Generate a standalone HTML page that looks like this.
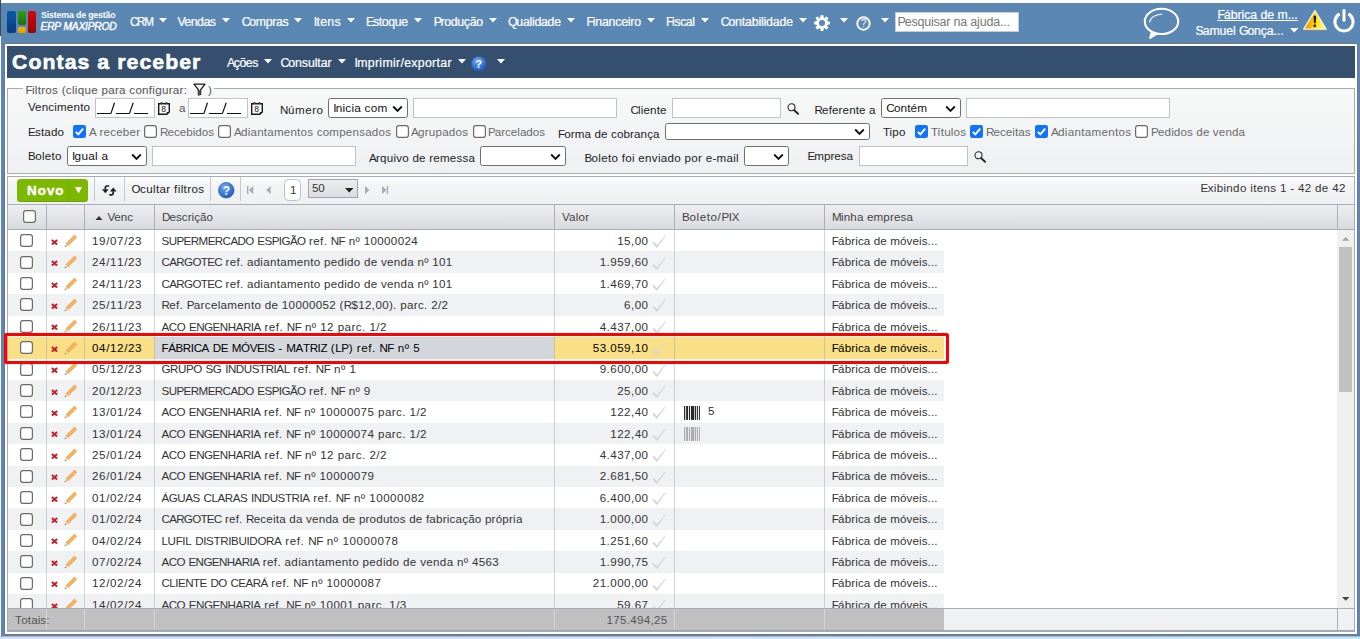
<!DOCTYPE html><html><head><meta charset="utf-8"><title>Contas a receber</title><style>
html,body{margin:0;padding:0}body{width:1360px;height:639px;overflow:hidden;position:relative;font-family:"Liberation Sans", sans-serif;background:#5b87b4}
#p div,#p svg,#p span{position:absolute;display:block}#p{position:absolute;left:0;top:0;width:1360px;height:639px;overflow:hidden}
.t{white-space:pre;font-kerning:none;font-family:"Liberation Sans", sans-serif}.t i{font-style:inherit}
</style></head><body><div id="p">
<div style="left:0px;top:0px;width:1360px;height:639px;background:#5b87b4;"></div>
<div style="left:0px;top:0px;width:1360px;height:3px;background:#ffffff;"></div>
<div style="left:0px;top:36px;width:1px;height:601px;background:#ffffff;"></div>
<div style="left:0px;top:0px;width:1px;height:36px;background:#414a52;"></div>
<div style="left:0px;top:636px;width:1360px;height:3px;background:linear-gradient(to right,#d9def0,#d6e2f3 50%,#c6e8f0);"></div>
<div style="left:0px;top:636px;width:1360px;height:1px;background:rgba(91,135,180,.45);"></div>
<div style="left:0px;top:637px;width:1px;height:2px;background:#bdeff0;"></div>
<div style="left:4px;top:43px;width:1354px;height:592px;background:#fff;border:1px solid #77757d;box-sizing:border-box"></div>
<div style="left:7px;top:46px;width:1348px;height:32px;background:#35506e;"></div>
<div style="left:7px;top:88px;width:1348px;height:86px;border:1px solid #a6acb6;box-sizing:border-box;background:linear-gradient(#f7f8f8,#eff0f1)"></div>
<div style="left:22.5px;top:88px;width:191.5px;height:1px;background:#f9f9f9;"></div>
<div style="left:7px;top:11px;width:8.5px;height:21.5px;border-radius:2px;background:linear-gradient(#0a5aa8,#073c7a)"></div>
<div style="left:17.5px;top:11px;width:8.5px;height:13.5px;border-radius:2px;background:linear-gradient(#2fa00f,#1d7010)"></div>
<div style="left:17.5px;top:26.5px;width:8.5px;height:6px;border-radius:1.5px;background:linear-gradient(#f5b400,#e09a00)"></div>
<div style="left:27.5px;top:11px;width:8.5px;height:21.5px;border-radius:2px;background:linear-gradient(#d80808,#980404)"></div>
<svg style="left:159px;top:18px" width="8" height="4.5" viewBox="0 0 8 4.5"><path d="M0 0H8L4.0 4.5Z" fill="#fff"/></svg>
<svg style="left:222px;top:18px" width="8" height="4.5" viewBox="0 0 8 4.5"><path d="M0 0H8L4.0 4.5Z" fill="#fff"/></svg>
<svg style="left:294px;top:18px" width="8" height="4.5" viewBox="0 0 8 4.5"><path d="M0 0H8L4.0 4.5Z" fill="#fff"/></svg>
<svg style="left:347px;top:18px" width="8" height="4.5" viewBox="0 0 8 4.5"><path d="M0 0H8L4.0 4.5Z" fill="#fff"/></svg>
<svg style="left:414px;top:18px" width="8" height="4.5" viewBox="0 0 8 4.5"><path d="M0 0H8L4.0 4.5Z" fill="#fff"/></svg>
<svg style="left:488.7px;top:18px" width="8" height="4.5" viewBox="0 0 8 4.5"><path d="M0 0H8L4.0 4.5Z" fill="#fff"/></svg>
<svg style="left:566.7px;top:18px" width="8" height="4.5" viewBox="0 0 8 4.5"><path d="M0 0H8L4.0 4.5Z" fill="#fff"/></svg>
<svg style="left:647px;top:18px" width="8" height="4.5" viewBox="0 0 8 4.5"><path d="M0 0H8L4.0 4.5Z" fill="#fff"/></svg>
<svg style="left:700.7px;top:18px" width="8" height="4.5" viewBox="0 0 8 4.5"><path d="M0 0H8L4.0 4.5Z" fill="#fff"/></svg>
<svg style="left:798.7px;top:18px" width="8" height="4.5" viewBox="0 0 8 4.5"><path d="M0 0H8L4.0 4.5Z" fill="#fff"/></svg>
<svg style="left:839.5px;top:18px" width="8" height="4.5" viewBox="0 0 8 4.5"><path d="M0 0H8L4.0 4.5Z" fill="#fff"/></svg>
<svg style="left:880.5px;top:18px" width="8" height="4.5" viewBox="0 0 8 4.5"><path d="M0 0H8L4.0 4.5Z" fill="#fff"/></svg>
<svg style="left:814px;top:14.900px" width="16" height="16" viewBox="-8 -8 16 16"><g fill="#fff">
<circle r="5.600"/><path d="M-1.900 -5L-1.250 -7.900H1.250L1.900 -5Z" transform="rotate(0)"/><path d="M-1.900 -5L-1.250 -7.900H1.250L1.900 -5Z" transform="rotate(45)"/><path d="M-1.900 -5L-1.250 -7.900H1.250L1.900 -5Z" transform="rotate(90)"/><path d="M-1.900 -5L-1.250 -7.900H1.250L1.900 -5Z" transform="rotate(135)"/><path d="M-1.900 -5L-1.250 -7.900H1.250L1.900 -5Z" transform="rotate(180)"/><path d="M-1.900 -5L-1.250 -7.900H1.250L1.900 -5Z" transform="rotate(225)"/><path d="M-1.900 -5L-1.250 -7.900H1.250L1.900 -5Z" transform="rotate(270)"/><path d="M-1.900 -5L-1.250 -7.900H1.250L1.900 -5Z" transform="rotate(315)"/></g><circle r="3.050" fill="#5b87b4"/></svg>
<svg style="left:855.500px;top:15.800px" width="15" height="15" viewBox="0 0 15 15"><circle cx="7.500" cy="7.500" r="6.200" fill="none" stroke="#fff" stroke-width="1.900"/><text x="7.500" y="11" font-size="10" text-anchor="middle" fill="#fff" font-family="Liberation Sans">?</text></svg>
<div style="left:895px;top:12px;width:124px;height:20px;background:#fff;border:1px solid #c8ccd2;box-sizing:border-box"></div>
<svg style="left:1142px;top:6px" width="40" height="34" viewBox="0 0 40 34"><path d="M9.700 25.300L7.800 32.400L15.800 27.400" fill="#fff" stroke="#fff" stroke-width="1.400" stroke-linejoin="round"/><ellipse cx="19.500" cy="15.400" rx="16.700" ry="12.600" fill="#5b87b4" stroke="#fff" stroke-width="2.100"/><path d="M7.700 16C8.300 11.500 13.500 8.300 19.800 8.100" fill="none" stroke="#e3ebf4" stroke-width="1.300" stroke-linecap="round"/></svg>
<svg style="left:1290px;top:28px" width="8.5" height="4.5" viewBox="0 0 8.5 4.5"><path d="M0 0H8.5L4.25 4.5Z" fill="#fff"/></svg>
<svg style="left:1302px;top:8px" width="26" height="24" viewBox="0 0 26 24"><defs><linearGradient id="wg" x1="0" y1="0" x2="1" y2="0"><stop offset=".2" stop-color="#f5a200"/><stop offset=".55" stop-color="#ffe000"/><stop offset=".85" stop-color="#fff870"/></linearGradient></defs><path d="M1.300 22.300H24.800" stroke="#7d8590" stroke-width="1.200"/><path d="M12.900 2.600L24.200 21.200H1.700Z" fill="url(#wg)" stroke="#f4f1e6" stroke-width="1.300" stroke-linejoin="round"/><path d="M11.600 7.800H14.100L13.700 15.200H12Z" fill="#151515"/><rect x="11.700" y="16.600" width="2.300" height="2.300" rx=".6" fill="#151515"/></svg>
<svg style="left:1332px;top:8px" width="24" height="26" viewBox="0 0 24 26"><path d="M7.630 5.820A9.100 9.100 0 1 0 16.370 5.820" fill="none" stroke="#fff" stroke-width="3"/><path d="M12 2.600V12.200" stroke="#fff" stroke-width="3" stroke-linecap="round"/></svg>
<svg style="left:264px;top:59px" width="8" height="4.5" viewBox="0 0 8 4.5"><path d="M0 0H8L4.0 4.5Z" fill="#fff"/></svg>
<svg style="left:337.5px;top:59px" width="8" height="4.5" viewBox="0 0 8 4.5"><path d="M0 0H8L4.0 4.5Z" fill="#fff"/></svg>
<svg style="left:457.5px;top:59px" width="8" height="4.5" viewBox="0 0 8 4.5"><path d="M0 0H8L4.0 4.5Z" fill="#fff"/></svg>
<svg style="left:497px;top:59px" width="8" height="4.5" viewBox="0 0 8 4.5"><path d="M0 0H8L4.0 4.5Z" fill="#fff"/></svg>
<svg style="left:471.4px;top:56.2px" width="15.5" height="15.5" viewBox="0 0 16 16"><defs><radialGradient id="hg471" cx=".4" cy=".3" r=".8"><stop offset="0" stop-color="#6fa8f0"/><stop offset="1" stop-color="#1550b8"/></radialGradient></defs><circle cx="8" cy="8" r="7.600" fill="url(#hg471)" stroke="#2a5cb0" stroke-width=".6"/><text x="8" y="12.300" font-size="11.500" font-weight="bold" text-anchor="middle" fill="#fff" font-family="Liberation Sans">?</text></svg>
<svg style="left:192.500px;top:82.500px" width="13" height="13" viewBox="0 0 13 13"><path d="M1 1.200H12L7.600 6.800V11.300L5.400 12V6.800Z" fill="#f6f6f7" stroke="#1a1a1a" stroke-width="1.300" stroke-linejoin="round"/><path d="M5.400 7H7.600V11.300L5.400 12Z" fill="#555"/></svg>
<div style="left:95px;top:98px;width:60px;height:20px;background:#fff;border:1px solid #bfc2c6;box-sizing:border-box"></div>
<svg style="left:97.2px;top:102px" width="52" height="13" viewBox="0 0 52 13"><g stroke="#111" fill="none"><path d="M0 11.500H13.800M18.900 11.500H32.300M37 11.500H51" stroke-width="1.100"/><path d="M13.900 11.600L17.500 .8M32.400 11.600L36.200 .8" stroke-width="1.200"/></g></svg>
<svg style="left:158px;top:102px" width="12" height="13" viewBox="0 0 12 13"><path d="M.7 1.700H11.300V10L8.800 12.300H.7Z" fill="#fff" stroke="#1a1a1a" stroke-width="1.400" stroke-linejoin="miter"/><path d="M8.800 12.300V10H11.300Z" fill="#1a1a1a"/><circle cx="3.500" cy="1" r="1" fill="#1a1a1a"/><circle cx="8.500" cy="1" r="1" fill="#1a1a1a"/><circle cx="3.500" cy="1.100" r=".45" fill="#fff"/><circle cx="8.500" cy="1.100" r=".45" fill="#fff"/><text x="5.700" y="10.400" font-size="8.500" text-anchor="middle" fill="#111" font-family="Liberation Sans">8</text></svg>
<div style="left:188px;top:98px;width:60px;height:20px;background:#fff;border:1px solid #bfc2c6;box-sizing:border-box"></div>
<svg style="left:190.2px;top:102px" width="52" height="13" viewBox="0 0 52 13"><g stroke="#111" fill="none"><path d="M0 11.500H13.800M18.900 11.500H32.300M37 11.500H51" stroke-width="1.100"/><path d="M13.900 11.600L17.500 .8M32.400 11.600L36.200 .8" stroke-width="1.200"/></g></svg>
<svg style="left:251px;top:102px" width="12" height="13" viewBox="0 0 12 13"><path d="M.7 1.700H11.300V10L8.800 12.300H.7Z" fill="#fff" stroke="#1a1a1a" stroke-width="1.400" stroke-linejoin="miter"/><path d="M8.800 12.300V10H11.300Z" fill="#1a1a1a"/><circle cx="3.500" cy="1" r="1" fill="#1a1a1a"/><circle cx="8.500" cy="1" r="1" fill="#1a1a1a"/><circle cx="3.500" cy="1.100" r=".45" fill="#fff"/><circle cx="8.500" cy="1.100" r=".45" fill="#fff"/><text x="5.700" y="10.400" font-size="8.500" text-anchor="middle" fill="#111" font-family="Liberation Sans">8</text></svg>
<div style="left:328px;top:98px;width:80px;height:20px;background:#fff;border:1px solid #6f6f6f;border-radius:2.500px;box-sizing:border-box"></div>
<svg style="left:392.0px;top:104.5px" width="11" height="8" viewBox="0 0 11 8"><path d="M1.200 1.500L5.500 5.800L9.800 1.500" fill="none" stroke="#111" stroke-width="1.900"/></svg>
<div style="left:413px;top:98px;width:204px;height:20px;background:#fff;border:1px solid #bfc2c6;box-sizing:border-box"></div>
<div style="left:672px;top:98px;width:109px;height:20px;background:#fff;border:1px solid #bfc2c6;box-sizing:border-box"></div>
<svg style="left:786.5px;top:102.5px" width="12" height="12" viewBox="0 0 12 12"><circle cx="4.500" cy="4.300" r="3.500" fill="none" stroke="#2a2a2a" stroke-width="1.100"/><path d="M7.300 7.200L11 10.700" stroke="#2a2a2a" stroke-width="2" stroke-linecap="round"/></svg>
<div style="left:881px;top:98px;width:80px;height:20px;background:#fff;border:1px solid #6f6f6f;border-radius:2.500px;box-sizing:border-box"></div>
<svg style="left:945.0px;top:104.5px" width="11" height="8" viewBox="0 0 11 8"><path d="M1.200 1.500L5.500 5.800L9.800 1.500" fill="none" stroke="#111" stroke-width="1.900"/></svg>
<div style="left:966px;top:98px;width:204px;height:20px;background:#fff;border:1px solid #bfc2c6;box-sizing:border-box"></div>
<svg style="left:73px;top:125px" width="13" height="13" viewBox="0 0 13 13"><rect x="0" y="0" width="13" height="13" rx="2.200" fill="#0f74fb"/><path d="M2.800 6.800L5.300 9.300L10.200 3.600" fill="none" stroke="#fff" stroke-width="1.900"/></svg>
<svg style="left:144px;top:125px" width="13" height="13" viewBox="0 0 13 13"><rect x=".6" y=".6" width="11.800" height="11.800" rx="2.300" fill="#fff" stroke="#6b6b6b" stroke-width="1.200"/></svg>
<svg style="left:218px;top:125px" width="13" height="13" viewBox="0 0 13 13"><rect x=".6" y=".6" width="11.800" height="11.800" rx="2.300" fill="#fff" stroke="#6b6b6b" stroke-width="1.200"/></svg>
<svg style="left:395.5px;top:125px" width="13" height="13" viewBox="0 0 13 13"><rect x=".6" y=".6" width="11.800" height="11.800" rx="2.300" fill="#fff" stroke="#6b6b6b" stroke-width="1.200"/></svg>
<svg style="left:472.5px;top:125px" width="13" height="13" viewBox="0 0 13 13"><rect x=".6" y=".6" width="11.800" height="11.800" rx="2.300" fill="#fff" stroke="#6b6b6b" stroke-width="1.200"/></svg>
<div style="left:665px;top:123px;width:205px;height:17px;background:#fff;border:1px solid #6f6f6f;border-radius:2.500px;box-sizing:border-box"></div>
<svg style="left:854.0px;top:128.0px" width="11" height="8" viewBox="0 0 11 8"><path d="M1.200 1.500L5.500 5.800L9.800 1.500" fill="none" stroke="#111" stroke-width="1.900"/></svg>
<svg style="left:915px;top:125px" width="13" height="13" viewBox="0 0 13 13"><rect x="0" y="0" width="13" height="13" rx="2.200" fill="#0f74fb"/><path d="M2.800 6.800L5.300 9.300L10.200 3.600" fill="none" stroke="#fff" stroke-width="1.900"/></svg>
<svg style="left:970px;top:125px" width="13" height="13" viewBox="0 0 13 13"><rect x="0" y="0" width="13" height="13" rx="2.200" fill="#0f74fb"/><path d="M2.800 6.800L5.300 9.300L10.200 3.600" fill="none" stroke="#fff" stroke-width="1.900"/></svg>
<svg style="left:1035px;top:125px" width="13" height="13" viewBox="0 0 13 13"><rect x="0" y="0" width="13" height="13" rx="2.200" fill="#0f74fb"/><path d="M2.800 6.800L5.300 9.300L10.200 3.600" fill="none" stroke="#fff" stroke-width="1.900"/></svg>
<svg style="left:1135px;top:125px" width="13" height="13" viewBox="0 0 13 13"><rect x=".6" y=".6" width="11.800" height="11.800" rx="2.300" fill="#fff" stroke="#6b6b6b" stroke-width="1.200"/></svg>
<div style="left:67px;top:146px;width:80px;height:20px;background:#fff;border:1px solid #6f6f6f;border-radius:2.500px;box-sizing:border-box"></div>
<svg style="left:131.0px;top:152.5px" width="11" height="8" viewBox="0 0 11 8"><path d="M1.200 1.500L5.500 5.800L9.800 1.500" fill="none" stroke="#111" stroke-width="1.900"/></svg>
<div style="left:152px;top:146px;width:204px;height:20px;background:#fff;border:1px solid #bfc2c6;box-sizing:border-box"></div>
<div style="left:480px;top:146px;width:86px;height:20px;background:#fff;border:1px solid #6f6f6f;border-radius:2.500px;box-sizing:border-box"></div>
<svg style="left:550.0px;top:152.5px" width="11" height="8" viewBox="0 0 11 8"><path d="M1.200 1.500L5.500 5.800L9.800 1.500" fill="none" stroke="#111" stroke-width="1.900"/></svg>
<div style="left:744px;top:146px;width:45px;height:20px;background:#fff;border:1px solid #6f6f6f;border-radius:2.500px;box-sizing:border-box"></div>
<svg style="left:773.0px;top:152.5px" width="11" height="8" viewBox="0 0 11 8"><path d="M1.200 1.500L5.500 5.800L9.800 1.500" fill="none" stroke="#111" stroke-width="1.900"/></svg>
<div style="left:859px;top:146px;width:109px;height:20px;background:#fff;border:1px solid #bfc2c6;box-sizing:border-box"></div>
<svg style="left:973.5px;top:151px" width="12" height="12" viewBox="0 0 12 12"><circle cx="4.500" cy="4.300" r="3.500" fill="none" stroke="#2a2a2a" stroke-width="1.100"/><path d="M7.300 7.200L11 10.700" stroke="#2a2a2a" stroke-width="2" stroke-linecap="round"/></svg>
<div style="left:7px;top:176px;width:1348px;height:29px;background:linear-gradient(#fdfdfd,#f3f4f5 30%,#eff0f2);border:1px solid #a6adb8;box-sizing:border-box"></div>
<div style="left:17px;top:179px;width:71px;height:23px;border-radius:3.500px;background:#7cb800;box-sizing:border-box;border-bottom:1px solid #6ea305"></div>
<div style="left:68px;top:180px;width:1px;height:21px;background:#72a903;"></div>
<svg style="left:75px;top:187px" width="7" height="6.500" viewBox="0 0 7 6.500"><path d="M0 0H7L3.500 6.500Z" fill="#fff"/></svg>
<div style="left:94px;top:177px;width:1px;height:24px;background:#c3c8cf;"></div>
<div style="left:124px;top:177px;width:1px;height:24px;background:#c3c8cf;"></div>
<div style="left:210px;top:177px;width:1px;height:24px;background:#c3c8cf;"></div>
<div style="left:240px;top:177px;width:1px;height:24px;background:#c3c8cf;"></div>
<svg style="left:102px;top:184.800px" width="15" height="11" viewBox="0 0 15 11"><g fill="none" stroke="#1e1e1e" stroke-width="1.700"><path d="M7.200 1H5.200Q3.300 1 3.300 2.900V4.600"/><path d="M7.300 9.800H9.300Q11.200 9.800 11.200 7.900V6.200"/></g><path d="M0 4.300H6.600L3.300 8.300Z" fill="#1e1e1e"/><path d="M7.900 6.400H14.500L11.200 2.400Z" fill="#1e1e1e"/></svg>
<svg style="left:218px;top:182px" width="16.5" height="16.5" viewBox="0 0 16 16"><defs><radialGradient id="hg218" cx=".4" cy=".3" r=".8"><stop offset="0" stop-color="#6fa8f0"/><stop offset="1" stop-color="#1550b8"/></radialGradient></defs><circle cx="8" cy="8" r="7.600" fill="url(#hg218)" stroke="#2a5cb0" stroke-width=".6"/><text x="8" y="12.300" font-size="11.500" font-weight="bold" text-anchor="middle" fill="#fff" font-family="Liberation Sans">?</text></svg>
<svg style="left:246.800px;top:185.800px" width="7" height="8.200" viewBox="0 0 7 8.200"><rect x="0" y="0" width="1.400" height="8.200" fill="#a7adb7"/><path d="M6.300 0V8.200L1.800 4.100Z" fill="#a7adb7"/></svg>
<svg style="left:265.600px;top:185.800px" width="5" height="8.200" viewBox="0 0 5 8.200"><path d="M4.700 0V8.200L0 4.100Z" fill="#a7adb7"/></svg>
<div style="left:284px;top:179px;width:17px;height:22px;background:#fff;border:1px solid #bcc0c7;border-radius:4.500px;box-sizing:border-box"></div>
<div style="left:308px;top:179px;width:50px;height:19px;background:linear-gradient(#ededef,#dcdde0);border:1px solid #a0a5ad;box-sizing:border-box"></div>
<svg style="left:344.5px;top:188px" width="8.5" height="4.5" viewBox="0 0 8.5 4.5"><path d="M0 0H8.5L4.25 4.5Z" fill="#222"/></svg>
<svg style="left:365px;top:185.800px" width="5" height="8.200" viewBox="0 0 5 8.200"><path d="M0 0V8.200L4.500 4.100Z" fill="#a7adb7"/></svg>
<svg style="left:382px;top:185.800px" width="7" height="8.200" viewBox="0 0 7 8.200"><rect x="4.700" y="0" width="1.400" height="8.200" fill="#a7adb7"/><path d="M0 0V8.200L4.400 4.100Z" fill="#a7adb7"/></svg>
<div style="left:8px;top:230px;width:1329px;height:379px;background:#fff;"></div>
<div style="left:7px;top:205px;width:1348px;height:25px;background:linear-gradient(#eceef0,#d8dade);border:1px solid #a6adb8;border-top:none;box-sizing:border-box"></div>
<div style="left:46px;top:205px;width:1px;height:24px;background:#a9b0bb;"></div>
<div style="left:84px;top:205px;width:1px;height:24px;background:#a9b0bb;"></div>
<div style="left:154px;top:205px;width:1px;height:24px;background:#a9b0bb;"></div>
<div style="left:554px;top:205px;width:1px;height:24px;background:#a9b0bb;"></div>
<div style="left:674px;top:205px;width:1px;height:24px;background:#a9b0bb;"></div>
<div style="left:824px;top:205px;width:1px;height:24px;background:#a9b0bb;"></div>
<div style="left:1337px;top:205px;width:1px;height:24px;background:#a9b0bb;"></div>
<svg style="left:23px;top:210px" width="13" height="13" viewBox="0 0 13 13"><rect x=".6" y=".6" width="11.800" height="11.800" rx="2.300" fill="#fff" stroke="#6b6b6b" stroke-width="1.200"/></svg>
<svg style="left:95px;top:215.500px" width="8" height="4.500" viewBox="0 0 8 4.500"><path d="M0 4.500H8L4 0Z" fill="#333"/></svg>
<svg style="left:20px;top:234.2px" width="13" height="13" viewBox="0 0 13 13"><rect x=".6" y=".6" width="11.800" height="11.800" rx="2.300" fill="#fff" stroke="#6b6b6b" stroke-width="1.200"/></svg>
<svg style="left:50.5px;top:238.7px" width="7" height="6.500" viewBox="0 0 7 6.500"><path d="M.9 .9L6.100 5.600M6.100 .9L.9 5.600" stroke="#c4202c" stroke-width="2"/></svg>
<svg style="left:63.5px;top:233.7px" width="14" height="14" viewBox="0 0 14 14"><path d="M10.600 .8L13 3.200L4.200 12L1.800 9.600Z" fill="#f0a040"/><path d="M11.400 1.600L12.200 2.400L3.400 11.200L2.600 10.400Z" fill="#f7c27a"/><path d="M1.800 9.600L4.200 12L.6 13.200Z" fill="#e8c9a0"/><path d="M.6 13.200L1 11.900L1.900 12.800Z" fill="#444"/></svg>
<svg style="left:652px;top:235.2px" width="14" height="13" viewBox="0 0 14 13"><path d="M.3 8.200L1.900 6.700L4.800 10.200L13.300 .3L13.800 .7L5.200 12.800H4.400Z" fill="#d7d7d7"/></svg>
<div style="left:8px;top:251.41px;width:936px;height:21.409999999999997px;background:#f0f1f2;"></div>
<svg style="left:20px;top:255.61px" width="13" height="13" viewBox="0 0 13 13"><rect x=".6" y=".6" width="11.800" height="11.800" rx="2.300" fill="#fff" stroke="#6b6b6b" stroke-width="1.200"/></svg>
<svg style="left:50.5px;top:260.11px" width="7" height="6.500" viewBox="0 0 7 6.500"><path d="M.9 .9L6.100 5.600M6.100 .9L.9 5.600" stroke="#c4202c" stroke-width="2"/></svg>
<svg style="left:63.5px;top:255.11px" width="14" height="14" viewBox="0 0 14 14"><path d="M10.600 .8L13 3.200L4.200 12L1.800 9.600Z" fill="#f0a040"/><path d="M11.400 1.600L12.200 2.400L3.400 11.200L2.600 10.400Z" fill="#f7c27a"/><path d="M1.800 9.600L4.200 12L.6 13.200Z" fill="#e8c9a0"/><path d="M.6 13.200L1 11.900L1.900 12.800Z" fill="#444"/></svg>
<svg style="left:652px;top:256.61px" width="14" height="13" viewBox="0 0 14 13"><path d="M.3 8.200L1.900 6.700L4.800 10.200L13.300 .3L13.800 .7L5.200 12.800H4.400Z" fill="#d7d7d7"/></svg>
<svg style="left:20px;top:277.02px" width="13" height="13" viewBox="0 0 13 13"><rect x=".6" y=".6" width="11.800" height="11.800" rx="2.300" fill="#fff" stroke="#6b6b6b" stroke-width="1.200"/></svg>
<svg style="left:50.5px;top:281.52px" width="7" height="6.500" viewBox="0 0 7 6.500"><path d="M.9 .9L6.100 5.600M6.100 .9L.9 5.600" stroke="#c4202c" stroke-width="2"/></svg>
<svg style="left:63.5px;top:276.52px" width="14" height="14" viewBox="0 0 14 14"><path d="M10.600 .8L13 3.200L4.200 12L1.800 9.600Z" fill="#f0a040"/><path d="M11.400 1.600L12.200 2.400L3.400 11.200L2.600 10.400Z" fill="#f7c27a"/><path d="M1.800 9.600L4.200 12L.6 13.200Z" fill="#e8c9a0"/><path d="M.6 13.200L1 11.900L1.900 12.800Z" fill="#444"/></svg>
<svg style="left:652px;top:278.02px" width="14" height="13" viewBox="0 0 14 13"><path d="M.3 8.200L1.900 6.700L4.800 10.200L13.300 .3L13.800 .7L5.200 12.800H4.400Z" fill="#d7d7d7"/></svg>
<div style="left:8px;top:294.23px;width:936px;height:21.410000000000025px;background:#f0f1f2;"></div>
<svg style="left:20px;top:298.43px" width="13" height="13" viewBox="0 0 13 13"><rect x=".6" y=".6" width="11.800" height="11.800" rx="2.300" fill="#fff" stroke="#6b6b6b" stroke-width="1.200"/></svg>
<svg style="left:50.5px;top:302.93px" width="7" height="6.500" viewBox="0 0 7 6.500"><path d="M.9 .9L6.100 5.600M6.100 .9L.9 5.600" stroke="#c4202c" stroke-width="2"/></svg>
<svg style="left:63.5px;top:297.93px" width="14" height="14" viewBox="0 0 14 14"><path d="M10.600 .8L13 3.200L4.200 12L1.800 9.600Z" fill="#f0a040"/><path d="M11.400 1.600L12.200 2.400L3.400 11.200L2.600 10.400Z" fill="#f7c27a"/><path d="M1.800 9.600L4.200 12L.6 13.200Z" fill="#e8c9a0"/><path d="M.6 13.200L1 11.900L1.900 12.800Z" fill="#444"/></svg>
<svg style="left:652px;top:299.43px" width="14" height="13" viewBox="0 0 14 13"><path d="M.3 8.200L1.900 6.700L4.800 10.200L13.300 .3L13.800 .7L5.200 12.800H4.400Z" fill="#d7d7d7"/></svg>
<svg style="left:20px;top:319.84px" width="13" height="13" viewBox="0 0 13 13"><rect x=".6" y=".6" width="11.800" height="11.800" rx="2.300" fill="#fff" stroke="#6b6b6b" stroke-width="1.200"/></svg>
<svg style="left:50.5px;top:324.34px" width="7" height="6.500" viewBox="0 0 7 6.500"><path d="M.9 .9L6.100 5.600M6.100 .9L.9 5.600" stroke="#c4202c" stroke-width="2"/></svg>
<svg style="left:63.5px;top:319.34px" width="14" height="14" viewBox="0 0 14 14"><path d="M10.600 .8L13 3.200L4.200 12L1.800 9.600Z" fill="#f0a040"/><path d="M11.400 1.600L12.200 2.400L3.400 11.200L2.600 10.400Z" fill="#f7c27a"/><path d="M1.800 9.600L4.200 12L.6 13.200Z" fill="#e8c9a0"/><path d="M.6 13.200L1 11.900L1.900 12.800Z" fill="#444"/></svg>
<svg style="left:652px;top:320.84px" width="14" height="13" viewBox="0 0 14 13"><path d="M.3 8.200L1.900 6.700L4.800 10.200L13.300 .3L13.800 .7L5.200 12.800H4.400Z" fill="#d7d7d7"/></svg>
<div style="left:8px;top:337px;width:936px;height:21.5px;background:#f9df85;"></div>
<div style="left:155px;top:337px;width:399px;height:21.5px;background:#d3d6db;"></div>
<svg style="left:20px;top:341.25px" width="13" height="13" viewBox="0 0 13 13"><rect x=".6" y=".6" width="11.800" height="11.800" rx="2.300" fill="#fff" stroke="#6b6b6b" stroke-width="1.200"/></svg>
<svg style="left:50.5px;top:345.75px" width="7" height="6.500" viewBox="0 0 7 6.500"><path d="M.9 .9L6.100 5.600M6.100 .9L.9 5.600" stroke="#c4202c" stroke-width="2"/></svg>
<svg style="left:63.5px;top:340.75px" width="14" height="14" viewBox="0 0 14 14"><path d="M10.600 .8L13 3.200L4.200 12L1.800 9.600Z" fill="#f0a040"/><path d="M11.400 1.600L12.200 2.400L3.400 11.200L2.600 10.400Z" fill="#f7c27a"/><path d="M1.800 9.600L4.200 12L.6 13.200Z" fill="#e8c9a0"/><path d="M.6 13.200L1 11.900L1.900 12.800Z" fill="#444"/></svg>
<svg style="left:652px;top:342.25px" width="14" height="13" viewBox="0 0 14 13"><path d="M.3 8.200L1.900 6.700L4.800 10.200L13.300 .3L13.800 .7L5.200 12.800H4.400Z" fill="#d7d7d7"/></svg>
<svg style="left:20px;top:362.65999999999997px" width="13" height="13" viewBox="0 0 13 13"><rect x=".6" y=".6" width="11.800" height="11.800" rx="2.300" fill="#fff" stroke="#6b6b6b" stroke-width="1.200"/></svg>
<svg style="left:50.5px;top:367.15999999999997px" width="7" height="6.500" viewBox="0 0 7 6.500"><path d="M.9 .9L6.100 5.600M6.100 .9L.9 5.600" stroke="#c4202c" stroke-width="2"/></svg>
<svg style="left:63.5px;top:362.15999999999997px" width="14" height="14" viewBox="0 0 14 14"><path d="M10.600 .8L13 3.200L4.200 12L1.800 9.600Z" fill="#f0a040"/><path d="M11.400 1.600L12.200 2.400L3.400 11.200L2.600 10.400Z" fill="#f7c27a"/><path d="M1.800 9.600L4.200 12L.6 13.200Z" fill="#e8c9a0"/><path d="M.6 13.200L1 11.900L1.900 12.800Z" fill="#444"/></svg>
<svg style="left:652px;top:363.65999999999997px" width="14" height="13" viewBox="0 0 14 13"><path d="M.3 8.200L1.900 6.700L4.800 10.200L13.300 .3L13.800 .7L5.200 12.800H4.400Z" fill="#d7d7d7"/></svg>
<div style="left:8px;top:379.87px;width:936px;height:21.410000000000025px;background:#f0f1f2;"></div>
<svg style="left:20px;top:384.07px" width="13" height="13" viewBox="0 0 13 13"><rect x=".6" y=".6" width="11.800" height="11.800" rx="2.300" fill="#fff" stroke="#6b6b6b" stroke-width="1.200"/></svg>
<svg style="left:50.5px;top:388.57px" width="7" height="6.500" viewBox="0 0 7 6.500"><path d="M.9 .9L6.100 5.600M6.100 .9L.9 5.600" stroke="#c4202c" stroke-width="2"/></svg>
<svg style="left:63.5px;top:383.57px" width="14" height="14" viewBox="0 0 14 14"><path d="M10.600 .8L13 3.200L4.200 12L1.800 9.600Z" fill="#f0a040"/><path d="M11.400 1.600L12.200 2.400L3.400 11.200L2.600 10.400Z" fill="#f7c27a"/><path d="M1.800 9.600L4.200 12L.6 13.200Z" fill="#e8c9a0"/><path d="M.6 13.200L1 11.900L1.900 12.800Z" fill="#444"/></svg>
<svg style="left:652px;top:385.07px" width="14" height="13" viewBox="0 0 14 13"><path d="M.3 8.200L1.900 6.700L4.800 10.200L13.300 .3L13.800 .7L5.200 12.800H4.400Z" fill="#d7d7d7"/></svg>
<svg style="left:20px;top:405.48px" width="13" height="13" viewBox="0 0 13 13"><rect x=".6" y=".6" width="11.800" height="11.800" rx="2.300" fill="#fff" stroke="#6b6b6b" stroke-width="1.200"/></svg>
<svg style="left:50.5px;top:409.98px" width="7" height="6.500" viewBox="0 0 7 6.500"><path d="M.9 .9L6.100 5.600M6.100 .9L.9 5.600" stroke="#c4202c" stroke-width="2"/></svg>
<svg style="left:63.5px;top:404.98px" width="14" height="14" viewBox="0 0 14 14"><path d="M10.600 .8L13 3.200L4.200 12L1.800 9.600Z" fill="#f0a040"/><path d="M11.400 1.600L12.200 2.400L3.400 11.200L2.600 10.400Z" fill="#f7c27a"/><path d="M1.800 9.600L4.200 12L.6 13.200Z" fill="#e8c9a0"/><path d="M.6 13.200L1 11.900L1.900 12.800Z" fill="#444"/></svg>
<svg style="left:652px;top:406.48px" width="14" height="13" viewBox="0 0 14 13"><path d="M.3 8.200L1.900 6.700L4.800 10.200L13.300 .3L13.800 .7L5.200 12.800H4.400Z" fill="#d7d7d7"/></svg>
<div style="left:8px;top:422.69px;width:936px;height:21.410000000000025px;background:#f0f1f2;"></div>
<svg style="left:20px;top:426.89px" width="13" height="13" viewBox="0 0 13 13"><rect x=".6" y=".6" width="11.800" height="11.800" rx="2.300" fill="#fff" stroke="#6b6b6b" stroke-width="1.200"/></svg>
<svg style="left:50.5px;top:431.39px" width="7" height="6.500" viewBox="0 0 7 6.500"><path d="M.9 .9L6.100 5.600M6.100 .9L.9 5.600" stroke="#c4202c" stroke-width="2"/></svg>
<svg style="left:63.5px;top:426.39px" width="14" height="14" viewBox="0 0 14 14"><path d="M10.600 .8L13 3.200L4.200 12L1.800 9.600Z" fill="#f0a040"/><path d="M11.400 1.600L12.200 2.400L3.400 11.200L2.600 10.400Z" fill="#f7c27a"/><path d="M1.800 9.600L4.200 12L.6 13.200Z" fill="#e8c9a0"/><path d="M.6 13.200L1 11.900L1.900 12.800Z" fill="#444"/></svg>
<svg style="left:652px;top:427.89px" width="14" height="13" viewBox="0 0 14 13"><path d="M.3 8.200L1.900 6.700L4.800 10.200L13.300 .3L13.800 .7L5.200 12.800H4.400Z" fill="#d7d7d7"/></svg>
<svg style="left:20px;top:448.29999999999995px" width="13" height="13" viewBox="0 0 13 13"><rect x=".6" y=".6" width="11.800" height="11.800" rx="2.300" fill="#fff" stroke="#6b6b6b" stroke-width="1.200"/></svg>
<svg style="left:50.5px;top:452.79999999999995px" width="7" height="6.500" viewBox="0 0 7 6.500"><path d="M.9 .9L6.100 5.600M6.100 .9L.9 5.600" stroke="#c4202c" stroke-width="2"/></svg>
<svg style="left:63.5px;top:447.79999999999995px" width="14" height="14" viewBox="0 0 14 14"><path d="M10.600 .8L13 3.200L4.200 12L1.800 9.600Z" fill="#f0a040"/><path d="M11.400 1.600L12.200 2.400L3.400 11.200L2.600 10.400Z" fill="#f7c27a"/><path d="M1.800 9.600L4.200 12L.6 13.200Z" fill="#e8c9a0"/><path d="M.6 13.200L1 11.900L1.900 12.800Z" fill="#444"/></svg>
<svg style="left:652px;top:449.29999999999995px" width="14" height="13" viewBox="0 0 14 13"><path d="M.3 8.200L1.900 6.700L4.800 10.200L13.300 .3L13.800 .7L5.200 12.800H4.400Z" fill="#d7d7d7"/></svg>
<div style="left:8px;top:465.51px;width:936px;height:21.410000000000025px;background:#f0f1f2;"></div>
<svg style="left:20px;top:469.71px" width="13" height="13" viewBox="0 0 13 13"><rect x=".6" y=".6" width="11.800" height="11.800" rx="2.300" fill="#fff" stroke="#6b6b6b" stroke-width="1.200"/></svg>
<svg style="left:50.5px;top:474.21px" width="7" height="6.500" viewBox="0 0 7 6.500"><path d="M.9 .9L6.100 5.600M6.100 .9L.9 5.600" stroke="#c4202c" stroke-width="2"/></svg>
<svg style="left:63.5px;top:469.21px" width="14" height="14" viewBox="0 0 14 14"><path d="M10.600 .8L13 3.200L4.200 12L1.800 9.600Z" fill="#f0a040"/><path d="M11.400 1.600L12.200 2.400L3.400 11.200L2.600 10.400Z" fill="#f7c27a"/><path d="M1.800 9.600L4.200 12L.6 13.200Z" fill="#e8c9a0"/><path d="M.6 13.200L1 11.900L1.900 12.800Z" fill="#444"/></svg>
<svg style="left:652px;top:470.71px" width="14" height="13" viewBox="0 0 14 13"><path d="M.3 8.200L1.900 6.700L4.800 10.200L13.300 .3L13.800 .7L5.200 12.800H4.400Z" fill="#d7d7d7"/></svg>
<svg style="left:20px;top:491.12px" width="13" height="13" viewBox="0 0 13 13"><rect x=".6" y=".6" width="11.800" height="11.800" rx="2.300" fill="#fff" stroke="#6b6b6b" stroke-width="1.200"/></svg>
<svg style="left:50.5px;top:495.62px" width="7" height="6.500" viewBox="0 0 7 6.500"><path d="M.9 .9L6.100 5.600M6.100 .9L.9 5.600" stroke="#c4202c" stroke-width="2"/></svg>
<svg style="left:63.5px;top:490.62px" width="14" height="14" viewBox="0 0 14 14"><path d="M10.600 .8L13 3.200L4.200 12L1.800 9.600Z" fill="#f0a040"/><path d="M11.400 1.600L12.200 2.400L3.400 11.200L2.600 10.400Z" fill="#f7c27a"/><path d="M1.800 9.600L4.200 12L.6 13.200Z" fill="#e8c9a0"/><path d="M.6 13.200L1 11.900L1.900 12.800Z" fill="#444"/></svg>
<svg style="left:652px;top:492.12px" width="14" height="13" viewBox="0 0 14 13"><path d="M.3 8.200L1.900 6.700L4.800 10.200L13.300 .3L13.800 .7L5.200 12.800H4.400Z" fill="#d7d7d7"/></svg>
<div style="left:8px;top:508.33px;width:936px;height:21.410000000000025px;background:#f0f1f2;"></div>
<svg style="left:20px;top:512.53px" width="13" height="13" viewBox="0 0 13 13"><rect x=".6" y=".6" width="11.800" height="11.800" rx="2.300" fill="#fff" stroke="#6b6b6b" stroke-width="1.200"/></svg>
<svg style="left:50.5px;top:517.03px" width="7" height="6.500" viewBox="0 0 7 6.500"><path d="M.9 .9L6.100 5.600M6.100 .9L.9 5.600" stroke="#c4202c" stroke-width="2"/></svg>
<svg style="left:63.5px;top:512.03px" width="14" height="14" viewBox="0 0 14 14"><path d="M10.600 .8L13 3.200L4.200 12L1.800 9.600Z" fill="#f0a040"/><path d="M11.400 1.600L12.200 2.400L3.400 11.200L2.600 10.400Z" fill="#f7c27a"/><path d="M1.800 9.600L4.200 12L.6 13.200Z" fill="#e8c9a0"/><path d="M.6 13.200L1 11.900L1.900 12.800Z" fill="#444"/></svg>
<svg style="left:652px;top:513.53px" width="14" height="13" viewBox="0 0 14 13"><path d="M.3 8.200L1.900 6.700L4.800 10.200L13.300 .3L13.800 .7L5.200 12.800H4.400Z" fill="#d7d7d7"/></svg>
<svg style="left:20px;top:533.94px" width="13" height="13" viewBox="0 0 13 13"><rect x=".6" y=".6" width="11.800" height="11.800" rx="2.300" fill="#fff" stroke="#6b6b6b" stroke-width="1.200"/></svg>
<svg style="left:50.5px;top:538.44px" width="7" height="6.500" viewBox="0 0 7 6.500"><path d="M.9 .9L6.100 5.600M6.100 .9L.9 5.600" stroke="#c4202c" stroke-width="2"/></svg>
<svg style="left:63.5px;top:533.44px" width="14" height="14" viewBox="0 0 14 14"><path d="M10.600 .8L13 3.200L4.200 12L1.800 9.600Z" fill="#f0a040"/><path d="M11.400 1.600L12.200 2.400L3.400 11.200L2.600 10.400Z" fill="#f7c27a"/><path d="M1.800 9.600L4.200 12L.6 13.200Z" fill="#e8c9a0"/><path d="M.6 13.200L1 11.900L1.900 12.800Z" fill="#444"/></svg>
<svg style="left:652px;top:534.94px" width="14" height="13" viewBox="0 0 14 13"><path d="M.3 8.200L1.900 6.700L4.800 10.200L13.300 .3L13.800 .7L5.200 12.800H4.400Z" fill="#d7d7d7"/></svg>
<div style="left:8px;top:551.15px;width:936px;height:21.409999999999968px;background:#f0f1f2;"></div>
<svg style="left:20px;top:555.3499999999999px" width="13" height="13" viewBox="0 0 13 13"><rect x=".6" y=".6" width="11.800" height="11.800" rx="2.300" fill="#fff" stroke="#6b6b6b" stroke-width="1.200"/></svg>
<svg style="left:50.5px;top:559.8499999999999px" width="7" height="6.500" viewBox="0 0 7 6.500"><path d="M.9 .9L6.100 5.600M6.100 .9L.9 5.600" stroke="#c4202c" stroke-width="2"/></svg>
<svg style="left:63.5px;top:554.8499999999999px" width="14" height="14" viewBox="0 0 14 14"><path d="M10.600 .8L13 3.200L4.200 12L1.800 9.600Z" fill="#f0a040"/><path d="M11.400 1.600L12.200 2.400L3.400 11.200L2.600 10.400Z" fill="#f7c27a"/><path d="M1.800 9.600L4.200 12L.6 13.200Z" fill="#e8c9a0"/><path d="M.6 13.200L1 11.900L1.900 12.800Z" fill="#444"/></svg>
<svg style="left:652px;top:556.3499999999999px" width="14" height="13" viewBox="0 0 14 13"><path d="M.3 8.200L1.900 6.700L4.800 10.200L13.300 .3L13.800 .7L5.200 12.800H4.400Z" fill="#d7d7d7"/></svg>
<svg style="left:20px;top:576.76px" width="13" height="13" viewBox="0 0 13 13"><rect x=".6" y=".6" width="11.800" height="11.800" rx="2.300" fill="#fff" stroke="#6b6b6b" stroke-width="1.200"/></svg>
<svg style="left:50.5px;top:581.26px" width="7" height="6.500" viewBox="0 0 7 6.500"><path d="M.9 .9L6.100 5.600M6.100 .9L.9 5.600" stroke="#c4202c" stroke-width="2"/></svg>
<svg style="left:63.5px;top:576.26px" width="14" height="14" viewBox="0 0 14 14"><path d="M10.600 .8L13 3.200L4.200 12L1.800 9.600Z" fill="#f0a040"/><path d="M11.400 1.600L12.200 2.400L3.400 11.200L2.600 10.400Z" fill="#f7c27a"/><path d="M1.800 9.600L4.200 12L.6 13.200Z" fill="#e8c9a0"/><path d="M.6 13.200L1 11.900L1.900 12.800Z" fill="#444"/></svg>
<svg style="left:652px;top:577.76px" width="14" height="13" viewBox="0 0 14 13"><path d="M.3 8.200L1.900 6.700L4.800 10.200L13.300 .3L13.800 .7L5.200 12.800H4.400Z" fill="#d7d7d7"/></svg>
<div style="left:8px;top:593.97px;width:936px;height:14.029999999999973px;background:#f0f1f2;"></div>
<svg style="left:20px;top:598.1700000000001px" width="13" height="13" viewBox="0 0 13 13"><rect x=".6" y=".6" width="11.800" height="11.800" rx="2.300" fill="#fff" stroke="#6b6b6b" stroke-width="1.200"/></svg>
<svg style="left:50.5px;top:602.6700000000001px" width="7" height="6.500" viewBox="0 0 7 6.500"><path d="M.9 .9L6.100 5.600M6.100 .9L.9 5.600" stroke="#c4202c" stroke-width="2"/></svg>
<svg style="left:63.5px;top:597.6700000000001px" width="14" height="14" viewBox="0 0 14 14"><path d="M10.600 .8L13 3.200L4.200 12L1.800 9.600Z" fill="#f0a040"/><path d="M11.400 1.600L12.200 2.400L3.400 11.200L2.600 10.400Z" fill="#f7c27a"/><path d="M1.800 9.600L4.200 12L.6 13.200Z" fill="#e8c9a0"/><path d="M.6 13.200L1 11.900L1.900 12.800Z" fill="#444"/></svg>
<svg style="left:652px;top:599.1700000000001px" width="14" height="13" viewBox="0 0 14 13"><path d="M.3 8.200L1.900 6.700L4.800 10.200L13.300 .3L13.800 .7L5.200 12.800H4.400Z" fill="#d7d7d7"/></svg>
<svg style="left:683.85px;top:406px" width="16.500" height="13.900" viewBox="0 0 16.500 13.900"><rect x="0" y="0" width="1.2" height="13.900" fill="#2a2a2a"/><rect x="2.1" y="0" width="2" height="13.900" fill="#2a2a2a"/><rect x="5" y="0" width="1" height="13.900" fill="#2a2a2a"/><rect x="6.9" y="0" width="3.4" height="13.900" fill="#2a2a2a"/><rect x="11" y="0" width="1.2" height="13.900" fill="#2a2a2a"/><rect x="13.1" y="0" width="1" height="13.900" fill="#2a2a2a"/><rect x="15.1" y="0" width="1.2" height="13.900" fill="#2a2a2a"/></svg>
<svg style="left:683.85px;top:427px" width="16.500" height="13.900" viewBox="0 0 16.500 13.900"><rect x="0" y="0" width="1.2" height="13.900" fill="#ababab"/><rect x="2.1" y="0" width="2" height="13.900" fill="#ababab"/><rect x="5" y="0" width="1" height="13.900" fill="#ababab"/><rect x="6.9" y="0" width="3.4" height="13.900" fill="#ababab"/><rect x="11" y="0" width="1.2" height="13.900" fill="#ababab"/><rect x="13.1" y="0" width="1" height="13.900" fill="#ababab"/><rect x="15.1" y="0" width="1.2" height="13.900" fill="#ababab"/></svg>
<div style="left:46px;top:230px;width:1px;height:379px;background:rgba(150,160,175,.45);"></div>
<div style="left:84px;top:230px;width:1px;height:379px;background:rgba(150,160,175,.45);"></div>
<div style="left:154px;top:230px;width:1px;height:379px;background:rgba(150,160,175,.45);"></div>
<div style="left:554px;top:230px;width:1px;height:379px;background:rgba(150,160,175,.45);"></div>
<div style="left:674px;top:230px;width:1px;height:379px;background:rgba(150,160,175,.45);"></div>
<div style="left:824px;top:230px;width:1px;height:379px;background:rgba(150,160,175,.45);"></div>
<div style="left:1337px;top:230px;width:17px;height:379px;background:#f0f0f0;"></div>
<div style="left:1339px;top:247px;width:13px;height:145px;background:#c1c1c1;"></div>
<svg style="left:1341.800px;top:237.300px" width="7.500" height="3.800" viewBox="0 0 8 4"><path d="M0 4H8L4 0Z" fill="#a3a3a3"/></svg>
<svg style="left:1341.800px;top:597px" width="7.500" height="3.800" viewBox="0 0 8 4"><path d="M0 0H8L4 4Z" fill="#444"/></svg>
<span class="t" style="top:4.85px;font-size:8.8px;line-height:20px;color:#fff;letter-spacing:-0.159px;font-weight:bold;left:41.00px;">Sistema de gestão</span>
<span class="t" style="top:17.43px;font-size:10.3px;line-height:20px;color:#fff;letter-spacing:-0.270px;font-style:italic;-webkit-text-stroke:0.4px #fff;left:40.60px;">ERP MAXIPROD</span>
<span class="t" style="top:11.74px;font-size:12.3px;line-height:20px;color:#fff;letter-spacing:-0.450px;-webkit-text-stroke:0.22px #fff;left:129.50px;transform:scaleX(0.9519);transform-origin:left center;"><i style="letter-spacing:-1.434px">CRM</i></span>
<span class="t" style="top:11.74px;font-size:12.3px;line-height:20px;color:#fff;letter-spacing:-0.447px;-webkit-text-stroke:0.22px #fff;left:177.50px;"><i style="letter-spacing:-1.431px">V</i>endas</span>
<span class="t" style="top:11.74px;font-size:12.3px;line-height:20px;color:#fff;letter-spacing:-0.320px;-webkit-text-stroke:0.22px #fff;left:241.70px;"><i style="letter-spacing:-1.304px">C</i>ompras</span>
<span class="t" style="top:11.74px;font-size:12.3px;line-height:20px;color:#fff;letter-spacing:0.328px;-webkit-text-stroke:0.22px #fff;left:313.70px;"><i style="letter-spacing:-0.656px">I</i>tens</span>
<span class="t" style="top:11.74px;font-size:12.3px;line-height:20px;color:#fff;letter-spacing:-0.357px;-webkit-text-stroke:0.22px #fff;left:366.00px;"><i style="letter-spacing:-1.341px">E</i>stoque</span>
<span class="t" style="top:11.74px;font-size:12.3px;line-height:20px;color:#fff;letter-spacing:-0.339px;-webkit-text-stroke:0.22px #fff;left:433.70px;"><i style="letter-spacing:-1.323px">P</i>rodução</span>
<span class="t" style="top:11.74px;font-size:12.3px;line-height:20px;color:#fff;letter-spacing:-0.262px;-webkit-text-stroke:0.22px #fff;left:508.00px;"><i style="letter-spacing:-1.246px">Q</i>ualidade</span>
<span class="t" style="top:11.74px;font-size:12.3px;line-height:20px;color:#fff;letter-spacing:-0.215px;-webkit-text-stroke:0.22px #fff;left:586.50px;"><i style="letter-spacing:-1.199px">F</i>inanceiro</span>
<span class="t" style="top:11.74px;font-size:12.3px;line-height:20px;color:#fff;letter-spacing:-0.428px;-webkit-text-stroke:0.22px #fff;left:666.00px;"><i style="letter-spacing:-1.412px">F</i>iscal</span>
<span class="t" style="top:11.74px;font-size:12.3px;line-height:20px;color:#fff;letter-spacing:-0.161px;-webkit-text-stroke:0.22px #fff;left:720.70px;"><i style="letter-spacing:-1.145px">C</i>ontabilidade</span>
<span class="t" style="top:11.67px;font-size:12.5px;line-height:20px;color:#777;letter-spacing:-0.198px;left:897.50px;"><i style="letter-spacing:-1.198px">P</i>esquisar na ajuda...</span>
<span class="t" style="top:4.74px;font-size:12.3px;line-height:20px;color:#fff;letter-spacing:-0.045px;text-decoration:underline;text-underline-offset:1px;-webkit-text-stroke:0.2px #fff;left:1217.40px;"><i style="letter-spacing:-1.029px">F</i>ábrica de m...</span>
<span class="t" style="top:21.24px;font-size:12.3px;line-height:20px;color:#fff;letter-spacing:-0.118px;-webkit-text-stroke:0.2px #fff;left:1195.60px;"><i style="letter-spacing:-1.102px">S</i>amuel <i style="letter-spacing:-1.102px">G</i>onça...</span>
<span class="t" style="top:51.66px;font-size:20.3px;line-height:20px;color:#fff;letter-spacing:1.000px;font-weight:bold;-webkit-text-stroke:0.55px #fff;left:12.40px;transform:scaleX(1.0491);transform-origin:left center;">Contas a receber</span>
<span class="t" style="top:52.74px;font-size:12.3px;line-height:20px;color:#fff;letter-spacing:-0.450px;-webkit-text-stroke:0.22px #fff;left:226.60px;transform:scaleX(0.9999);transform-origin:left center;"><i style="letter-spacing:-1.434px">A</i>ções</span>
<span class="t" style="top:52.74px;font-size:12.3px;line-height:20px;color:#fff;letter-spacing:-0.082px;-webkit-text-stroke:0.22px #fff;left:280.50px;"><i style="letter-spacing:-1.066px">C</i>onsultar</span>
<span class="t" style="top:52.74px;font-size:12.3px;line-height:20px;color:#fff;letter-spacing:0.315px;-webkit-text-stroke:0.22px #fff;left:354.50px;"><i style="letter-spacing:-0.669px">I</i>mprimir/exportar</span>
<span class="t" style="top:79.98px;font-size:11.6px;line-height:20px;color:#555;letter-spacing:0.292px;left:25.50px;"><i style="letter-spacing:-0.636px">F</i>iltros (clique para configurar:</span>
<span class="t" style="top:79.98px;font-size:11.6px;line-height:20px;color:#555;letter-spacing:0.000px;left:208.00px;">)</span>
<span class="t" style="top:96.98px;font-size:11.6px;line-height:20px;color:#222;letter-spacing:0.188px;left:28.00px;"><i style="letter-spacing:-0.740px">V</i>encimento</span>
<span class="t" style="top:97.58px;font-size:11.6px;line-height:20px;color:#555;letter-spacing:0.000px;left:179.00px;">a</span>
<span class="t" style="top:99.98px;font-size:11.6px;line-height:20px;color:#222;letter-spacing:0.534px;left:280.00px;"><i style="letter-spacing:-0.394px">N</i>úmero</span>
<span class="t" style="top:97.91px;font-size:11.8px;line-height:20px;color:#111;letter-spacing:0.214px;left:333.20px;"><i style="letter-spacing:-0.730px">I</i>nicia com</span>
<span class="t" style="top:99.98px;font-size:11.6px;line-height:20px;color:#222;letter-spacing:0.138px;left:630.50px;"><i style="letter-spacing:-0.790px">C</i>liente</span>
<span class="t" style="top:99.98px;font-size:11.6px;line-height:20px;color:#222;letter-spacing:0.133px;left:814.50px;"><i style="letter-spacing:-0.795px">R</i>eferente a</span>
<span class="t" style="top:97.91px;font-size:11.8px;line-height:20px;color:#111;letter-spacing:0.065px;left:886.30px;"><i style="letter-spacing:-0.879px">C</i>ontém</span>
<span class="t" style="top:121.98px;font-size:11.6px;line-height:20px;color:#222;letter-spacing:0.163px;left:28.00px;"><i style="letter-spacing:-0.765px">E</i>stado</span>
<span class="t" style="top:121.98px;font-size:11.6px;line-height:20px;color:#6a6a6a;letter-spacing:0.207px;left:89.00px;"><i style="letter-spacing:-0.721px">A</i> receber</span>
<span class="t" style="top:121.98px;font-size:11.6px;line-height:20px;color:#6a6a6a;letter-spacing:0.016px;left:160.00px;"><i style="letter-spacing:-0.912px">R</i>ecebidos</span>
<span class="t" style="top:121.98px;font-size:11.6px;line-height:20px;color:#6a6a6a;letter-spacing:0.215px;left:234.00px;"><i style="letter-spacing:-0.713px">A</i>diantamentos compensados</span>
<span class="t" style="top:121.98px;font-size:11.6px;line-height:20px;color:#6a6a6a;letter-spacing:0.229px;left:411.00px;"><i style="letter-spacing:-0.699px">A</i>grupados</span>
<span class="t" style="top:121.98px;font-size:11.6px;line-height:20px;color:#6a6a6a;letter-spacing:-0.010px;left:488.00px;"><i style="letter-spacing:-0.938px">P</i>arcelados</span>
<span class="t" style="top:123.98px;font-size:11.6px;line-height:20px;color:#222;letter-spacing:0.118px;left:558.00px;"><i style="letter-spacing:-0.810px">F</i>orma de cobrança</span>
<span class="t" style="top:121.98px;font-size:11.6px;line-height:20px;color:#222;letter-spacing:0.286px;left:883.00px;"><i style="letter-spacing:-0.642px">T</i>ipo</span>
<span class="t" style="top:121.98px;font-size:11.6px;line-height:20px;color:#6a6a6a;letter-spacing:0.188px;left:931.00px;"><i style="letter-spacing:-0.740px">T</i>ítulos</span>
<span class="t" style="top:121.98px;font-size:11.6px;line-height:20px;color:#6a6a6a;letter-spacing:0.045px;left:986.00px;"><i style="letter-spacing:-0.883px">R</i>eceitas</span>
<span class="t" style="top:121.98px;font-size:11.6px;line-height:20px;color:#6a6a6a;letter-spacing:0.298px;left:1051.00px;"><i style="letter-spacing:-0.630px">A</i>diantamentos</span>
<span class="t" style="top:121.98px;font-size:11.6px;line-height:20px;color:#6a6a6a;letter-spacing:0.140px;left:1151.00px;"><i style="letter-spacing:-0.788px">P</i>edidos de venda</span>
<span class="t" style="top:146.48px;font-size:11.6px;line-height:20px;color:#222;letter-spacing:0.309px;left:28.00px;"><i style="letter-spacing:-0.619px">B</i>oleto</span>
<span class="t" style="top:145.91px;font-size:11.8px;line-height:20px;color:#111;letter-spacing:0.250px;left:72.00px;"><i style="letter-spacing:-0.694px">I</i>gual a</span>
<span class="t" style="top:147.68px;font-size:11.6px;line-height:20px;color:#222;letter-spacing:0.224px;left:369.00px;"><i style="letter-spacing:-0.704px">A</i>rquivo de remessa</span>
<span class="t" style="top:147.68px;font-size:11.6px;line-height:20px;color:#222;letter-spacing:0.292px;left:584.50px;"><i style="letter-spacing:-0.636px">B</i>oleto foi enviado por e-mail</span>
<span class="t" style="top:146.48px;font-size:11.6px;line-height:20px;color:#222;letter-spacing:0.003px;left:807.50px;"><i style="letter-spacing:-0.925px">E</i>mpresa</span>
<span class="t" style="top:180.63px;font-size:12.6px;line-height:20px;color:#fff;letter-spacing:1.000px;font-weight:bold;-webkit-text-stroke:0.4px #fff;left:26.50px;transform:scaleX(1.0585);transform-origin:left center;">Novo</span>
<span class="t" style="top:178.98px;font-size:11.6px;line-height:20px;color:#222;letter-spacing:0.366px;left:131.50px;"><i style="letter-spacing:-0.562px">O</i>cultar filtros</span>
<span class="t" style="top:179.98px;font-size:11.6px;line-height:20px;color:#333;letter-spacing:0.000px;left:290.00px;">1</span>
<span class="t" style="top:177.98px;font-size:11.6px;line-height:20px;color:#333;letter-spacing:-0.206px;left:312.00px;">50</span>
<span class="t" style="top:178.48px;font-size:11.6px;line-height:20px;color:#333;letter-spacing:0.328px;left:1200.50px;"><i style="letter-spacing:-0.600px">E</i>xibindo itens 1 - 42 de 42</span>
<span class="t" style="top:206.68px;font-size:11.6px;line-height:20px;color:#444;letter-spacing:-0.005px;left:107.50px;"><i style="letter-spacing:-0.933px">V</i>enc</span>
<span class="t" style="top:206.68px;font-size:11.6px;line-height:20px;color:#444;letter-spacing:0.047px;left:162.00px;"><i style="letter-spacing:-0.881px">D</i>escrição</span>
<span class="t" style="top:206.68px;font-size:11.6px;line-height:20px;color:#444;letter-spacing:0.211px;left:562.00px;"><i style="letter-spacing:-0.717px">V</i>alor</span>
<span class="t" style="top:206.68px;font-size:11.6px;line-height:20px;color:#444;letter-spacing:0.601px;left:682.00px;"><i style="letter-spacing:-0.327px">B</i>oleto/<i style="letter-spacing:-0.327px">PIX</i></span>
<span class="t" style="top:206.68px;font-size:11.6px;line-height:20px;color:#444;letter-spacing:0.168px;left:832.00px;"><i style="letter-spacing:-0.760px">M</i>inha empresa</span>
<span class="t" style="top:230.88px;font-size:11.6px;line-height:20px;color:#333;letter-spacing:0.623px;left:92.00px;">19/07/23</span>
<span class="t" style="top:230.88px;font-size:11.6px;line-height:20px;color:#333;letter-spacing:0.350px;left:161.50px;"><i style="letter-spacing:-0.578px">SUPERMERCADO</i> <i style="letter-spacing:-0.578px">ESPIGÃO</i> ref. <i style="letter-spacing:-0.578px">NF</i> nº 10000024</span>
<span class="t" style="top:230.88px;font-size:11.6px;line-height:20px;color:#333;letter-spacing:0.450px;right:711.55px;">15,00</span>
<span class="t" style="top:230.88px;font-size:11.6px;line-height:20px;color:#333;letter-spacing:0.117px;left:831.80px;"><i style="letter-spacing:-0.811px">F</i>ábrica de móveis...</span>
<span class="t" style="top:252.29px;font-size:11.6px;line-height:20px;color:#333;letter-spacing:0.623px;left:92.00px;">24/11/23</span>
<span class="t" style="top:252.29px;font-size:11.6px;line-height:20px;color:#333;letter-spacing:0.280px;left:161.50px;"><i style="letter-spacing:-0.648px">CARGOTEC</i> ref. adiantamento pedido de venda nº 101</span>
<span class="t" style="top:252.29px;font-size:11.6px;line-height:20px;color:#333;letter-spacing:0.450px;right:711.55px;">1.959,60</span>
<span class="t" style="top:252.29px;font-size:11.6px;line-height:20px;color:#333;letter-spacing:0.117px;left:831.80px;"><i style="letter-spacing:-0.811px">F</i>ábrica de móveis...</span>
<span class="t" style="top:273.70px;font-size:11.6px;line-height:20px;color:#333;letter-spacing:0.623px;left:92.00px;">24/11/23</span>
<span class="t" style="top:273.70px;font-size:11.6px;line-height:20px;color:#333;letter-spacing:0.280px;left:161.50px;"><i style="letter-spacing:-0.648px">CARGOTEC</i> ref. adiantamento pedido de venda nº 101</span>
<span class="t" style="top:273.70px;font-size:11.6px;line-height:20px;color:#333;letter-spacing:0.450px;right:711.55px;">1.469,70</span>
<span class="t" style="top:273.70px;font-size:11.6px;line-height:20px;color:#333;letter-spacing:0.117px;left:831.80px;"><i style="letter-spacing:-0.811px">F</i>ábrica de móveis...</span>
<span class="t" style="top:295.11px;font-size:11.6px;line-height:20px;color:#333;letter-spacing:0.623px;left:92.00px;">25/11/23</span>
<span class="t" style="top:295.11px;font-size:11.6px;line-height:20px;color:#333;letter-spacing:0.324px;left:161.50px;"><i style="letter-spacing:-0.604px">R</i>ef. <i style="letter-spacing:-0.604px">P</i>arcelamento de 10000052 (<i style="letter-spacing:-0.604px">R</i>$12,00). parc. 2/2</span>
<span class="t" style="top:295.11px;font-size:11.6px;line-height:20px;color:#333;letter-spacing:0.450px;right:711.55px;">6,00</span>
<span class="t" style="top:295.11px;font-size:11.6px;line-height:20px;color:#333;letter-spacing:0.117px;left:831.80px;"><i style="letter-spacing:-0.811px">F</i>ábrica de móveis...</span>
<span class="t" style="top:316.52px;font-size:11.6px;line-height:20px;color:#333;letter-spacing:0.623px;left:92.00px;">26/11/23</span>
<span class="t" style="top:316.52px;font-size:11.6px;line-height:20px;color:#333;letter-spacing:0.453px;left:161.50px;"><i style="letter-spacing:-0.475px">ACO</i> <i style="letter-spacing:-0.475px">ENGENHARIA</i> ref. <i style="letter-spacing:-0.475px">NF</i> nº 12 parc. 1/2</span>
<span class="t" style="top:316.52px;font-size:11.6px;line-height:20px;color:#333;letter-spacing:0.450px;right:711.55px;">4.437,00</span>
<span class="t" style="top:316.52px;font-size:11.6px;line-height:20px;color:#333;letter-spacing:0.117px;left:831.80px;"><i style="letter-spacing:-0.811px">F</i>ábrica de móveis...</span>
<span class="t" style="top:337.93px;font-size:11.6px;line-height:20px;color:#000;letter-spacing:0.623px;left:92.00px;">04/12/23</span>
<span class="t" style="top:337.93px;font-size:11.6px;line-height:20px;color:#000;letter-spacing:0.528px;left:161.50px;"><i style="letter-spacing:-0.400px">FÁBRICA</i> <i style="letter-spacing:-0.400px">DE</i> <i style="letter-spacing:-0.400px">MÓVEIS</i> - <i style="letter-spacing:-0.400px">MATRIZ</i> (<i style="letter-spacing:-0.400px">LP</i>) ref. <i style="letter-spacing:-0.400px">NF</i> nº 5</span>
<span class="t" style="top:337.93px;font-size:11.6px;line-height:20px;color:#000;letter-spacing:0.450px;right:711.55px;">53.059,10</span>
<span class="t" style="top:337.93px;font-size:11.6px;line-height:20px;color:#000;letter-spacing:0.117px;left:831.80px;"><i style="letter-spacing:-0.811px">F</i>ábrica de móveis...</span>
<span class="t" style="top:359.34px;font-size:11.6px;line-height:20px;color:#333;letter-spacing:0.623px;left:92.00px;">05/12/23</span>
<span class="t" style="top:359.34px;font-size:11.6px;line-height:20px;color:#333;letter-spacing:0.487px;left:161.50px;"><i style="letter-spacing:-0.441px">GRUPO</i> <i style="letter-spacing:-0.441px">SG</i> <i style="letter-spacing:-0.441px">INDUSTRIAL</i> ref. <i style="letter-spacing:-0.441px">NF</i> nº 1</span>
<span class="t" style="top:359.34px;font-size:11.6px;line-height:20px;color:#333;letter-spacing:0.450px;right:711.55px;">9.600,00</span>
<span class="t" style="top:359.34px;font-size:11.6px;line-height:20px;color:#333;letter-spacing:0.117px;left:831.80px;"><i style="letter-spacing:-0.811px">F</i>ábrica de móveis...</span>
<span class="t" style="top:380.75px;font-size:11.6px;line-height:20px;color:#333;letter-spacing:0.623px;left:92.00px;">20/12/23</span>
<span class="t" style="top:380.75px;font-size:11.6px;line-height:20px;color:#333;letter-spacing:0.350px;left:161.50px;"><i style="letter-spacing:-0.578px">SUPERMERCADO</i> <i style="letter-spacing:-0.578px">ESPIGÃO</i> ref. <i style="letter-spacing:-0.578px">NF</i> nº 9</span>
<span class="t" style="top:380.75px;font-size:11.6px;line-height:20px;color:#333;letter-spacing:0.450px;right:711.55px;">25,00</span>
<span class="t" style="top:380.75px;font-size:11.6px;line-height:20px;color:#333;letter-spacing:0.117px;left:831.80px;"><i style="letter-spacing:-0.811px">F</i>ábrica de móveis...</span>
<span class="t" style="top:402.16px;font-size:11.6px;line-height:20px;color:#333;letter-spacing:0.623px;left:92.00px;">13/01/24</span>
<span class="t" style="top:402.16px;font-size:11.6px;line-height:20px;color:#333;letter-spacing:0.423px;left:161.50px;"><i style="letter-spacing:-0.505px">ACO</i> <i style="letter-spacing:-0.505px">ENGENHARIA</i> ref. <i style="letter-spacing:-0.505px">NF</i> nº 10000075 parc. 1/2</span>
<span class="t" style="top:402.16px;font-size:11.6px;line-height:20px;color:#333;letter-spacing:0.450px;right:711.55px;">122,40</span>
<span class="t" style="top:402.16px;font-size:11.6px;line-height:20px;color:#333;letter-spacing:0.117px;left:831.80px;"><i style="letter-spacing:-0.811px">F</i>ábrica de móveis...</span>
<span class="t" style="top:423.57px;font-size:11.6px;line-height:20px;color:#333;letter-spacing:0.623px;left:92.00px;">13/01/24</span>
<span class="t" style="top:423.57px;font-size:11.6px;line-height:20px;color:#333;letter-spacing:0.423px;left:161.50px;"><i style="letter-spacing:-0.505px">ACO</i> <i style="letter-spacing:-0.505px">ENGENHARIA</i> ref. <i style="letter-spacing:-0.505px">NF</i> nº 10000074 parc. 1/2</span>
<span class="t" style="top:423.57px;font-size:11.6px;line-height:20px;color:#333;letter-spacing:0.450px;right:711.55px;">122,40</span>
<span class="t" style="top:423.57px;font-size:11.6px;line-height:20px;color:#333;letter-spacing:0.117px;left:831.80px;"><i style="letter-spacing:-0.811px">F</i>ábrica de móveis...</span>
<span class="t" style="top:444.98px;font-size:11.6px;line-height:20px;color:#333;letter-spacing:0.623px;left:92.00px;">25/01/24</span>
<span class="t" style="top:444.98px;font-size:11.6px;line-height:20px;color:#333;letter-spacing:0.453px;left:161.50px;"><i style="letter-spacing:-0.475px">ACO</i> <i style="letter-spacing:-0.475px">ENGENHARIA</i> ref. <i style="letter-spacing:-0.475px">NF</i> nº 12 parc. 2/2</span>
<span class="t" style="top:444.98px;font-size:11.6px;line-height:20px;color:#333;letter-spacing:0.450px;right:711.55px;">4.437,00</span>
<span class="t" style="top:444.98px;font-size:11.6px;line-height:20px;color:#333;letter-spacing:0.117px;left:831.80px;"><i style="letter-spacing:-0.811px">F</i>ábrica de móveis...</span>
<span class="t" style="top:466.39px;font-size:11.6px;line-height:20px;color:#333;letter-spacing:0.623px;left:92.00px;">26/01/24</span>
<span class="t" style="top:466.39px;font-size:11.6px;line-height:20px;color:#333;letter-spacing:0.424px;left:161.50px;"><i style="letter-spacing:-0.504px">ACO</i> <i style="letter-spacing:-0.504px">ENGENHARIA</i> ref. <i style="letter-spacing:-0.504px">NF</i> nº 10000079</span>
<span class="t" style="top:466.39px;font-size:11.6px;line-height:20px;color:#333;letter-spacing:0.450px;right:711.55px;">2.681,50</span>
<span class="t" style="top:466.39px;font-size:11.6px;line-height:20px;color:#333;letter-spacing:0.117px;left:831.80px;"><i style="letter-spacing:-0.811px">F</i>ábrica de móveis...</span>
<span class="t" style="top:487.80px;font-size:11.6px;line-height:20px;color:#333;letter-spacing:0.623px;left:92.00px;">01/02/24</span>
<span class="t" style="top:487.80px;font-size:11.6px;line-height:20px;color:#333;letter-spacing:0.485px;left:161.50px;"><i style="letter-spacing:-0.443px">ÁGUAS</i> <i style="letter-spacing:-0.443px">CLARAS</i> <i style="letter-spacing:-0.443px">INDUSTRIA</i> ref. <i style="letter-spacing:-0.443px">NF</i> nº 10000082</span>
<span class="t" style="top:487.80px;font-size:11.6px;line-height:20px;color:#333;letter-spacing:0.450px;right:711.55px;">6.400,00</span>
<span class="t" style="top:487.80px;font-size:11.6px;line-height:20px;color:#333;letter-spacing:0.117px;left:831.80px;"><i style="letter-spacing:-0.811px">F</i>ábrica de móveis...</span>
<span class="t" style="top:509.21px;font-size:11.6px;line-height:20px;color:#333;letter-spacing:0.623px;left:92.00px;">01/02/24</span>
<span class="t" style="top:509.21px;font-size:11.6px;line-height:20px;color:#333;letter-spacing:0.213px;left:161.50px;"><i style="letter-spacing:-0.715px">CARGOTEC</i> ref. <i style="letter-spacing:-0.715px">R</i>eceita da venda de produtos de fabricação própria</span>
<span class="t" style="top:509.21px;font-size:11.6px;line-height:20px;color:#333;letter-spacing:0.450px;right:711.55px;">1.000,00</span>
<span class="t" style="top:509.21px;font-size:11.6px;line-height:20px;color:#333;letter-spacing:0.117px;left:831.80px;"><i style="letter-spacing:-0.811px">F</i>ábrica de móveis...</span>
<span class="t" style="top:530.62px;font-size:11.6px;line-height:20px;color:#333;letter-spacing:0.623px;left:92.00px;">04/02/24</span>
<span class="t" style="top:530.62px;font-size:11.6px;line-height:20px;color:#333;letter-spacing:0.582px;left:161.50px;"><i style="letter-spacing:-0.346px">LUFIL</i> <i style="letter-spacing:-0.346px">DISTRIBUIDORA</i> ref. <i style="letter-spacing:-0.346px">NF</i> nº 10000078</span>
<span class="t" style="top:530.62px;font-size:11.6px;line-height:20px;color:#333;letter-spacing:0.450px;right:711.55px;">1.251,60</span>
<span class="t" style="top:530.62px;font-size:11.6px;line-height:20px;color:#333;letter-spacing:0.117px;left:831.80px;"><i style="letter-spacing:-0.811px">F</i>ábrica de móveis...</span>
<span class="t" style="top:552.03px;font-size:11.6px;line-height:20px;color:#333;letter-spacing:0.623px;left:92.00px;">07/02/24</span>
<span class="t" style="top:552.03px;font-size:11.6px;line-height:20px;color:#333;letter-spacing:0.345px;left:161.50px;"><i style="letter-spacing:-0.583px">ACO</i> <i style="letter-spacing:-0.583px">ENGENHARIA</i> ref. adiantamento pedido de venda nº 4563</span>
<span class="t" style="top:552.03px;font-size:11.6px;line-height:20px;color:#333;letter-spacing:0.450px;right:711.55px;">1.990,75</span>
<span class="t" style="top:552.03px;font-size:11.6px;line-height:20px;color:#333;letter-spacing:0.117px;left:831.80px;"><i style="letter-spacing:-0.811px">F</i>ábrica de móveis...</span>
<span class="t" style="top:573.44px;font-size:11.6px;line-height:20px;color:#333;letter-spacing:0.623px;left:92.00px;">12/02/24</span>
<span class="t" style="top:573.44px;font-size:11.6px;line-height:20px;color:#333;letter-spacing:0.402px;left:161.50px;"><i style="letter-spacing:-0.526px">CLIENTE</i> <i style="letter-spacing:-0.526px">DO</i> <i style="letter-spacing:-0.526px">CEARÁ</i> ref. <i style="letter-spacing:-0.526px">NF</i> nº 10000087</span>
<span class="t" style="top:573.44px;font-size:11.6px;line-height:20px;color:#333;letter-spacing:0.450px;right:711.55px;">21.000,00</span>
<span class="t" style="top:573.44px;font-size:11.6px;line-height:20px;color:#333;letter-spacing:0.117px;left:831.80px;"><i style="letter-spacing:-0.811px">F</i>ábrica de móveis...</span>
<span class="t" style="top:594.85px;font-size:11.6px;line-height:20px;color:#333;letter-spacing:0.623px;left:92.00px;">14/02/24</span>
<span class="t" style="top:594.85px;font-size:11.6px;line-height:20px;color:#333;letter-spacing:0.433px;left:161.50px;"><i style="letter-spacing:-0.495px">ACO</i> <i style="letter-spacing:-0.495px">ENGENHARIA</i> ref. <i style="letter-spacing:-0.495px">NF</i> nº 10001 parc. 1/3</span>
<span class="t" style="top:594.85px;font-size:11.6px;line-height:20px;color:#333;letter-spacing:0.450px;right:711.55px;">59,67</span>
<span class="t" style="top:594.85px;font-size:11.6px;line-height:20px;color:#333;letter-spacing:0.117px;left:831.80px;"><i style="letter-spacing:-0.811px">F</i>ábrica de móveis...</span>
<span class="t" style="top:400.88px;font-size:11.6px;line-height:20px;color:#333;letter-spacing:0.000px;left:707.90px;">5</span>
<div style="left:8px;top:608px;width:1346px;height:24px;background:#f0f1f3;"></div>
<div style="left:8px;top:608px;width:936px;height:24px;background:#c0c0c0;"></div>
<div style="left:7px;top:608px;width:1348px;height:1px;background:#a6adb8;"></div>
<div style="left:7px;top:630px;width:1348px;height:2px;background:linear-gradient(#9aa2ad,#a9b0ba);"></div>
<div style="left:46px;top:609px;width:1px;height:21px;background:#d2d4d8;"></div>
<div style="left:84px;top:609px;width:1px;height:21px;background:#d2d4d8;"></div>
<div style="left:154px;top:609px;width:1px;height:21px;background:#d2d4d8;"></div>
<div style="left:554px;top:609px;width:1px;height:21px;background:#d2d4d8;"></div>
<div style="left:674px;top:609px;width:1px;height:21px;background:#d2d4d8;"></div>
<div style="left:824px;top:609px;width:1px;height:21px;background:#d2d4d8;"></div>
<div style="left:1337px;top:609px;width:1px;height:21px;background:#a6adb8;"></div>
<div style="left:7px;top:204px;width:1px;height:427px;background:#a6adb8;"></div>
<div style="left:1354px;top:176px;width:1px;height:455px;background:#a6adb8;"></div>
<div style="left:4px;top:333px;width:945px;height:31px;border:3px solid #fe0000;border-radius:2.500px;box-sizing:border-box"></div>
<span class="t" style="top:609.98px;font-size:11.6px;line-height:20px;color:#555;letter-spacing:0.308px;left:606.40px;">175.494,25</span>
<span class="t" style="top:609.98px;font-size:11.6px;line-height:20px;color:#555;letter-spacing:0.104px;left:15.00px;"><i style="letter-spacing:-0.824px">T</i>otais:</span>
</div></body></html>
